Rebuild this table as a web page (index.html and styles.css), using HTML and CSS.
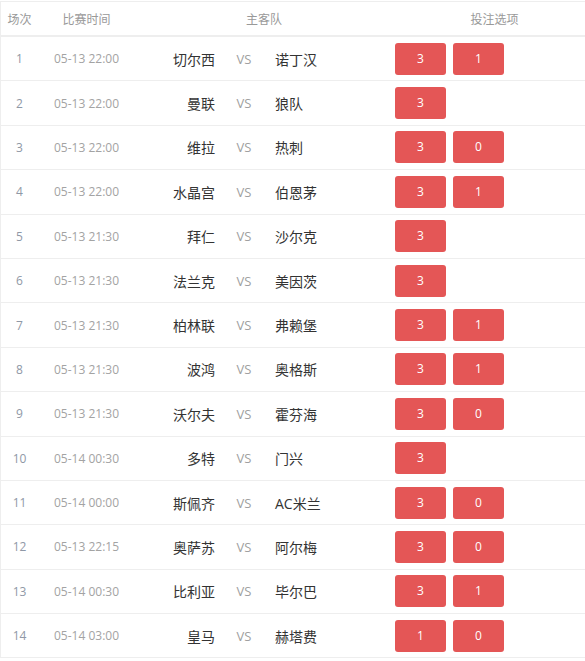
FILE: index.html
```html
<!DOCTYPE html>
<html lang="zh">
<head>
<meta charset="utf-8">
<link rel="stylesheet" href="styles.css">
</head>
<body>
<div class="board">
  <div class="row head">
    <div class="c-num">场次</div>
    <div class="c-date">比赛时间</div>
    <div class="c-teams">主客队</div>
    <div class="c-bets-h">投注选项</div>
  </div>
  <div class="row"><div class="c-num">1</div><div class="c-date">05-13 22:00</div><div class="c-home">切尔西</div><div class="c-vs">VS</div><div class="c-away">诺丁汉</div><div class="c-bets"><span class="btn">3</span><span class="btn">1</span></div></div>
  <div class="row"><div class="c-num">2</div><div class="c-date">05-13 22:00</div><div class="c-home">曼联</div><div class="c-vs">VS</div><div class="c-away">狼队</div><div class="c-bets"><span class="btn">3</span></div></div>
  <div class="row"><div class="c-num">3</div><div class="c-date">05-13 22:00</div><div class="c-home">维拉</div><div class="c-vs">VS</div><div class="c-away">热刺</div><div class="c-bets"><span class="btn">3</span><span class="btn">0</span></div></div>
  <div class="row"><div class="c-num">4</div><div class="c-date">05-13 22:00</div><div class="c-home">水晶宫</div><div class="c-vs">VS</div><div class="c-away">伯恩茅</div><div class="c-bets"><span class="btn">3</span><span class="btn">1</span></div></div>
  <div class="row"><div class="c-num">5</div><div class="c-date">05-13 21:30</div><div class="c-home">拜仁</div><div class="c-vs">VS</div><div class="c-away">沙尔克</div><div class="c-bets"><span class="btn">3</span></div></div>
  <div class="row"><div class="c-num">6</div><div class="c-date">05-13 21:30</div><div class="c-home">法兰克</div><div class="c-vs">VS</div><div class="c-away">美因茨</div><div class="c-bets"><span class="btn">3</span></div></div>
  <div class="row"><div class="c-num">7</div><div class="c-date">05-13 21:30</div><div class="c-home">柏林联</div><div class="c-vs">VS</div><div class="c-away">弗赖堡</div><div class="c-bets"><span class="btn">3</span><span class="btn">1</span></div></div>
  <div class="row"><div class="c-num">8</div><div class="c-date">05-13 21:30</div><div class="c-home">波鸿</div><div class="c-vs">VS</div><div class="c-away">奥格斯</div><div class="c-bets"><span class="btn">3</span><span class="btn">1</span></div></div>
  <div class="row"><div class="c-num">9</div><div class="c-date">05-13 21:30</div><div class="c-home">沃尔夫</div><div class="c-vs">VS</div><div class="c-away">霍芬海</div><div class="c-bets"><span class="btn">3</span><span class="btn">0</span></div></div>
  <div class="row"><div class="c-num">10</div><div class="c-date">05-14 00:30</div><div class="c-home">多特</div><div class="c-vs">VS</div><div class="c-away">门兴</div><div class="c-bets"><span class="btn">3</span></div></div>
  <div class="row"><div class="c-num">11</div><div class="c-date">05-14 00:00</div><div class="c-home">斯佩齐</div><div class="c-vs">VS</div><div class="c-away">AC米兰</div><div class="c-bets"><span class="btn">3</span><span class="btn">0</span></div></div>
  <div class="row"><div class="c-num">12</div><div class="c-date">05-13 22:15</div><div class="c-home">奥萨苏</div><div class="c-vs">VS</div><div class="c-away">阿尔梅</div><div class="c-bets"><span class="btn">3</span><span class="btn">0</span></div></div>
  <div class="row"><div class="c-num">13</div><div class="c-date">05-14 00:30</div><div class="c-home">比利亚</div><div class="c-vs">VS</div><div class="c-away">毕尔巴</div><div class="c-bets"><span class="btn">3</span><span class="btn">1</span></div></div>
  <div class="row"><div class="c-num">14</div><div class="c-date">05-14 03:00</div><div class="c-home">皇马</div><div class="c-vs">VS</div><div class="c-away">赫塔费</div><div class="c-bets"><span class="btn">1</span><span class="btn">0</span></div></div>
</div>
</body>
</html>
```
FILE: styles.css
```css
html, body {
  margin: 0;
  padding: 0;
  background: #fff;
  overflow: hidden;
}
body {
  padding-top: 1px;
  font-family: "Open Sans", "Noto Sans CJK SC", sans-serif;
  color: #333;
}
.board {
  border-left: 1px solid #eee;
  border-top: 1px solid #eee;
}
.row {
  display: grid;
  grid-template-columns: 37px 97px 90px 38px 122px 1fr;
  align-items: center;
  height: 44.4px;
  box-sizing: border-box;
  border-bottom: 1px solid #eee;
}
.row.head {
  height: 35px;
  border-bottom: 2px solid #eee;
  color: #999;
  font-size: 12px;
}
.c-num {
  text-align: center;
  font-size: 12px;
  color: #8f98a6;
}
.head .c-num { color: #999; }
.c-date {
  text-align: center;
  font-size: 12px;
  color: #a3a3a3;
}
.head .c-date { color: #999; }
.c-teams {
  grid-column: 3 / span 3;
  text-align: center;
  padding-left: 8px;
}
.c-bets-h {
  text-align: center;
  padding-left: 19px;
}
.c-home {
  text-align: right;
  padding-right: 10px;
  font-size: 14px;
  color: #333;
}
.c-vs {
  text-align: center;
  font-size: 13px;
  color: #a0a0a0;
}
.c-away {
  padding-left: 12px;
  font-size: 14px;
  color: #333;
}
.c-bets {
  display: flex;
  gap: 7px;
  padding-left: 10px;
}
.btn {
  width: 51px;
  height: 32px;
  line-height: 32px;
  border-radius: 3px;
  background: #e45656;
  color: #fff;
  text-align: center;
  font-size: 12px;
}
```
